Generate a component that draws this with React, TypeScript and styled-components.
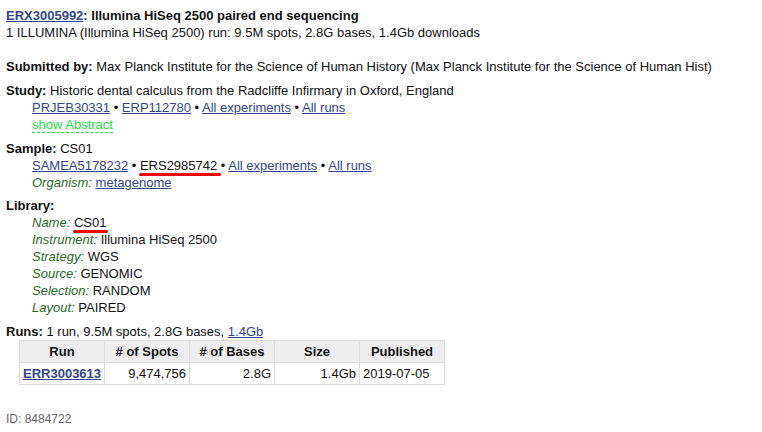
import React from "react";
import styled, { createGlobalStyle } from "styled-components";

const Global = createGlobalStyle`
  html, body { margin: 0; padding: 0; background: #fff; }
  body { font-family: "Liberation Sans", Arial, sans-serif; font-size: 13px; line-height: 17px; color: #111; }
`;

const Page = styled.div`
  padding: 7px 6px;
`;

const Block = styled.div<{ $gap?: number }>`
  margin-bottom: ${(p) => (p.$gap ?? 6)}px;
`;

const Line = styled.div``;

const Sub = styled.div`
  padding-left: 26px;
`;

const Strong = styled.b`
  font-weight: bold;
`;

const Link = styled.a<{ $bold?: boolean }>`
  color: #34468c;
  text-decoration: underline;
  font-weight: ${(p) => (p.$bold ? "bold" : "normal")};
  cursor: pointer;
`;

const Label = styled.i`
  color: #2a6a2a;
  font-style: italic;
`;

const Toggle = styled.span`
  color: #22dd44;
  border-bottom: 1px dashed #22dd44;
  cursor: pointer;
`;

const Marked = styled.span<{ $extra?: number }>`
  position: relative;
  &::after {
    content: "";
    position: absolute;
    left: -1px;
    right: ${(p) => -(p.$extra ?? 2)}px;
    bottom: -3px;
    height: 3px;
    border-radius: 2px;
    background: #ee0000;
  }
`;

const Table = styled.table`
  border-collapse: collapse;
  table-layout: fixed;
  width: 426px;
  margin-left: 13px;
  font-size: 13px;
`;

const Th = styled.th`
  background: #eeeeee;
  border: 1px solid #dddddd;
  padding: 2px 4px;
  font-weight: bold;
  text-align: center;
  white-space: nowrap;
`;

const Td = styled.td<{ $align?: string }>`
  border: 1px solid #dddddd;
  padding: 2px 3px;
  white-space: nowrap;
  text-align: ${(p) => p.$align ?? "right"};
`;

const Footer = styled.div`
  margin-top: 26px;
  font-size: 12px;
  color: #666;
`;

const Sep = () => <> • </>;

export default function App() {
  return (
    <>
      <Global />
      <Page>
        <Block $gap={17}>
          <Line>
            <Strong>
              <Link $bold>ERX3005992</Link>: Illumina HiSeq 2500 paired end sequencing
            </Strong>
          </Line>
          <Line>1 ILLUMINA (Illumina HiSeq 2500) run: 9.5M spots, 2.8G bases, 1.4Gb downloads</Line>
        </Block>
        <Block $gap={7}>
          <Strong>Submitted by:</Strong> Max Planck Institute for the Science of Human History (Max Planck Institute for
          the Science of Human Hist)
        </Block>
        <Block $gap={7}>
          <Line>
            <Strong>Study:</Strong> Historic dental calculus from the Radcliffe Infirmary in Oxford, England
          </Line>
          <Sub>
            <Link>PRJEB30331</Link>
            <Sep />
            <Link>ERP112780</Link>
            <Sep />
            <Link>All experiments</Link>
            <Sep />
            <Link>All runs</Link>
          </Sub>
          <Sub>
            <Toggle>show Abstract</Toggle>
          </Sub>
        </Block>
        <Block>
          <Line>
            <Strong>Sample:</Strong> CS01
          </Line>
          <Sub>
            <Link>SAMEA5178232</Link>
            <Sep />
            <Marked $extra={4}>ERS2985742</Marked>
            <Sep />
            <Link>All experiments</Link>
            <Sep />
            <Link>All runs</Link>
          </Sub>
          <Sub>
            <Label>Organism:</Label> <Link>metagenome</Link>
          </Sub>
        </Block>
        <Block $gap={7}>
          <Line>
            <Strong>Library:</Strong>
          </Line>
          <Sub>
            <Label>Name:</Label> <Marked>CS01</Marked>
          </Sub>
          <Sub>
            <Label>Instrument:</Label> Illumina HiSeq 2500
          </Sub>
          <Sub>
            <Label>Strategy:</Label> WGS
          </Sub>
          <Sub>
            <Label>Source:</Label> GENOMIC
          </Sub>
          <Sub>
            <Label>Selection:</Label> RANDOM
          </Sub>
          <Sub>
            <Label>Layout:</Label> PAIRED
          </Sub>
        </Block>
        <Block $gap={0}>
          <Line>
            <Strong>Runs:</Strong> 1 run, 9.5M spots, 2.8G bases, <Link>1.4Gb</Link>
          </Line>
          <Table>
            <thead>
              <tr>
                <Th>Run</Th>
                <Th># of Spots</Th>
                <Th># of Bases</Th>
                <Th>Size</Th>
                <Th>Published</Th>
              </tr>
            </thead>
            <tbody>
              <tr>
                <Td $align="left">
                  <Link $bold>ERR3003613</Link>
                </Td>
                <Td>9,474,756</Td>
                <Td>2.8G</Td>
                <Td>1.4Gb</Td>
                <Td $align="left">2019-07-05</Td>
              </tr>
            </tbody>
          </Table>
        </Block>
        <Footer>ID: 8484722</Footer>
      </Page>
    </>
  );
}
